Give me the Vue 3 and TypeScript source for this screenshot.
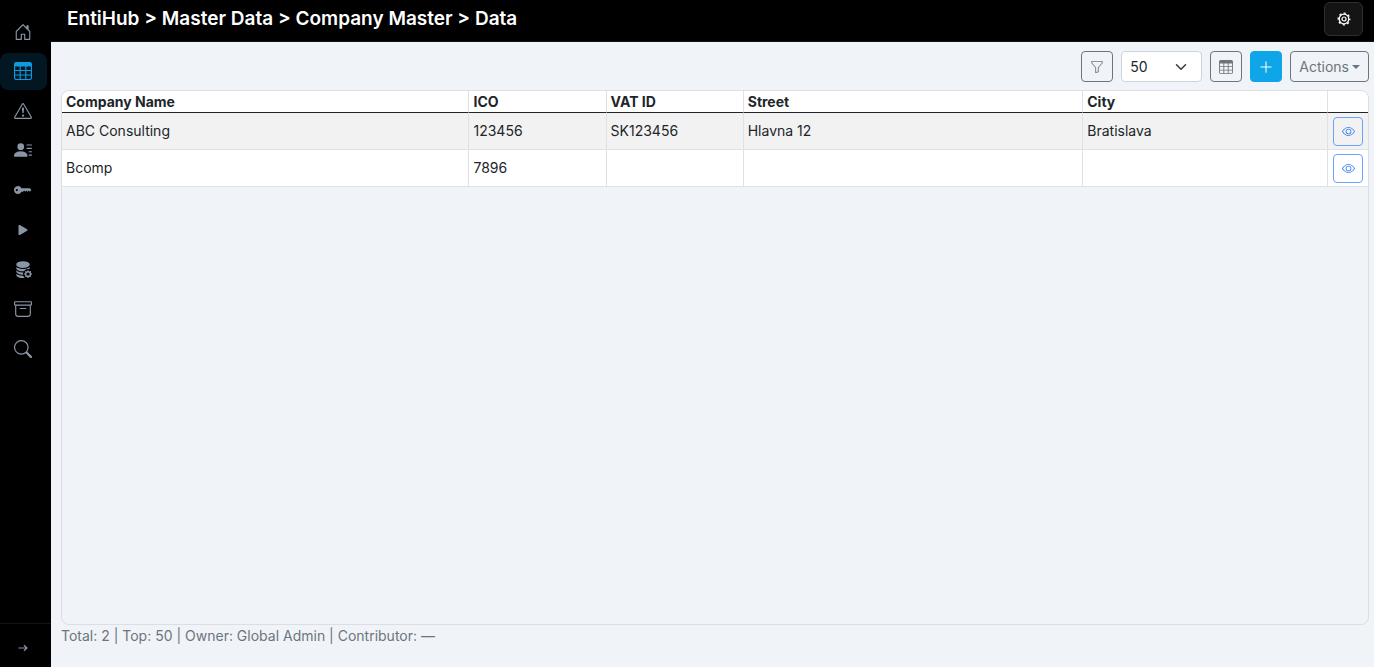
<script setup lang="ts">
import { ref } from 'vue'

interface NavItem {
  label: string
  paths: string[]
  active?: boolean
}

interface Company {
  name: string
  ico: string
  vat: string
  street: string
  city: string
}

const tablePath =
  'M0 2a2 2 0 0 1 2-2h12a2 2 0 0 1 2 2v12a2 2 0 0 1-2 2H2a2 2 0 0 1-2-2zm15 2h-4v3h4zm0 4h-4v3h4zm0 4h-4v3h3a1 1 0 0 0 1-1zm-5 3v-3H6v3zm-5 0v-3H1v2a1 1 0 0 0 1 1zm-4-4h4V8H1zm0-4h4V4H1zm5-3v3h4V4zm4 4H6v3h4z'

const navItems: NavItem[] = [
  {
    label: 'Home',
    paths: [
      'M8.354 1.146a.5.5 0 0 0-.708 0l-6 6A.5.5 0 0 0 1.5 7.5v7a.5.5 0 0 0 .5.5h4.5a.5.5 0 0 0 .5-.5v-4h2v4a.5.5 0 0 0 .5.5H14a.5.5 0 0 0 .5-.5v-7a.5.5 0 0 0-.146-.354L13 5.793V2.5a.5.5 0 0 0-.5-.5h-1a.5.5 0 0 0-.5.5v1.293zM2.5 14V7.707l5.5-5.5 5.5 5.5V14H10v-4a.5.5 0 0 0-.5-.5h-3a.5.5 0 0 0-.5.5v4z',
    ],
  },
  { label: 'Master Data', paths: [tablePath], active: true },
  {
    label: 'Issues',
    paths: [
      'M7.938 2.016A.13.13 0 0 1 8.002 2a.13.13 0 0 1 .063.016.15.15 0 0 1 .054.057l6.857 11.667c.036.06.035.124.002.183a.2.2 0 0 1-.054.06.1.1 0 0 1-.066.017H1.146a.1.1 0 0 1-.066-.017.2.2 0 0 1-.054-.06.18.18 0 0 1 .002-.183L7.884 2.073a.15.15 0 0 1 .054-.057m1.044-.45a1.13 1.13 0 0 0-1.96 0L.165 13.233c-.457.778.091 1.767.98 1.767h13.713c.889 0 1.438-.99.98-1.767z',
      'M7.002 12a1 1 0 1 1 2 0 1 1 0 0 1-2 0M7.1 5.995a.905.905 0 1 1 1.8 0l-.35 3.507a.552.552 0 0 1-1.1 0z',
    ],
  },
  {
    label: 'Users',
    paths: [
      'M6 8a3 3 0 1 0 0-6 3 3 0 0 0 0 6m-5 6s-1 0-1-1 1-4 6-4 6 3 6 4-1 1-1 1zM11 3.5a.5.5 0 0 1 .5-.5h4a.5.5 0 0 1 0 1h-4a.5.5 0 0 1-.5-.5m.5 2.5a.5.5 0 0 0 0 1h4a.5.5 0 0 0 0-1zm2 3a.5.5 0 0 0 0 1h2a.5.5 0 0 0 0-1zm0 3a.5.5 0 0 0 0 1h2a.5.5 0 0 0 0-1z',
    ],
  },
  {
    label: 'Keys',
    paths: [
      'M3.5 11.5a3.5 3.5 0 1 1 3.163-5H14L15.5 8 14 9.5l-1-1-1 1-1-1-1 1-1-1-1 1H6.663a3.5 3.5 0 0 1-3.163 2M2.5 9a1 1 0 1 0 0-2 1 1 0 0 0 0 2',
    ],
  },
  {
    label: 'Run',
    paths: [
      'm11.596 8.697-6.363 3.692c-.54.313-1.233-.066-1.233-.697V4.308c0-.63.692-1.01 1.233-.696l6.363 3.692a.802.802 0 0 1 0 1.393',
    ],
  },
  {
    label: 'Data sources',
    paths: [
      'M8 1c-1.573 0-3.022.289-4.096.777C2.875 2.245 2 2.993 2 4s.875 1.755 1.904 2.223C4.978 6.711 6.427 7 8 7s3.022-.289 4.096-.777C13.125 5.755 14 5.007 14 4s-.875-1.755-1.904-2.223C11.022 1.289 9.573 1 8 1',
      'M2 7v-.839c.457.432 1.004.751 1.49.972C4.722 7.693 6.318 8 8 8s3.278-.307 4.51-.867c.486-.22 1.033-.54 1.49-.972V7c0 .424-.155.802-.411 1.133a4.51 4.51 0 0 0-4.815 1.843A12 12 0 0 1 8 10c-1.573 0-3.022-.289-4.096-.777C2.875 8.755 2 8.007 2 7m6.257 3.998L8 11c-1.682 0-3.278-.307-4.51-.867-.486-.22-1.033-.54-1.49-.972V10c0 1.007.875 1.755 1.904 2.223C4.978 12.711 6.427 13 8 13h.027a4.55 4.55 0 0 1 .23-2.002m-.002 3L8 14c-1.682 0-3.278-.307-4.51-.867-.486-.22-1.033-.54-1.49-.972V13c0 1.007.875 1.755 1.904 2.223C4.978 15.711 6.427 16 8 16c.536 0 1.058-.034 1.555-.097a4.5 4.5 0 0 1-1.3-1.905m3.631-4.538c.18-.613 1.048-.613 1.229 0l.043.148a.64.64 0 0 0 .921.382l.136-.074c.561-.306 1.175.308.87.869l-.075.136a.64.64 0 0 0 .382.92l.149.045c.612.18.612 1.048 0 1.229l-.15.043a.64.64 0 0 0-.38.921l.074.136c.305.561-.309 1.175-.87.87l-.136-.075a.64.64 0 0 0-.92.382l-.045.149c-.18.612-1.048.612-1.229 0l-.043-.15a.64.64 0 0 0-.921-.38l-.136.074c-.561.305-1.175-.309-.87-.87l.075-.136a.64.64 0 0 0-.382-.92l-.148-.045c-.613-.18-.613-1.048 0-1.229l.148-.043a.64.64 0 0 0 .382-.921l-.074-.136c-.306-.561.308-1.175.869-.87l.136.075a.64.64 0 0 0 .92-.382zM14 12.5a1.5 1.5 0 1 0-3 0 1.5 1.5 0 0 0 3 0',
    ],
  },
  {
    label: 'Archive',
    paths: [
      'M0 2a1 1 0 0 1 1-1h14a1 1 0 0 1 1 1v2a1 1 0 0 1-1 1v7.5a2.5 2.5 0 0 1-2.5 2.5h-9A2.5 2.5 0 0 1 1 12.5V5a1 1 0 0 1-1-1zm2 3v7.5A1.5 1.5 0 0 0 3.5 14h9a1.5 1.5 0 0 0 1.5-1.5V5zm13-3H1v2h14zM5 7.5a.5.5 0 0 1 .5-.5h5a.5.5 0 0 1 0 1h-5a.5.5 0 0 1-.5-.5',
    ],
  },
  {
    label: 'Search',
    paths: [
      'M11.742 10.344a6.5 6.5 0 1 0-1.397 1.398h-.001q.044.06.098.115l3.85 3.85a1 1 0 0 0 1.415-1.414l-3.85-3.85a1 1 0 0 0-.115-.1zM12 6.5a5.5 5.5 0 1 1-11 0 5.5 5.5 0 0 1 11 0',
    ],
  },
]

const companies: Company[] = [
  { name: 'ABC Consulting', ico: '123456', vat: 'SK123456', street: 'Hlavna 12', city: 'Bratislava' },
  { name: 'Bcomp', ico: '7896', vat: '', street: '', city: '' },
]

const pageSize = ref('50')
</script>

<template>
  <div class="shell">
    <aside class="sidebar">
      <nav class="nav" aria-label="Main">
        <a
          v-for="item in navItems"
          :key="item.label"
          href="#"
          class="nav-link"
          :class="{ active: item.active }"
          :aria-label="item.label"
        >
          <svg viewBox="0 0 16 16" width="18" height="18" fill="currentColor" aria-hidden="true">
            <path v-for="d in item.paths" :key="d" :d="d" />
          </svg>
        </a>
      </nav>
      <div class="sidebar-foot">
        <button type="button" class="expand" aria-label="Expand menu">
          <svg viewBox="0 0 10 10" width="10" height="10" fill="none" stroke="currentColor" aria-hidden="true">
            <path d="M.5 5h8.5M6 2.2 9 5 6 7.8" stroke-width="1.2" />
          </svg>
        </button>
      </div>
    </aside>

    <div class="page">
      <header class="topbar">
        <h1 class="title">EntiHub &gt; Master Data &gt; Company Master &gt; Data</h1>
        <button type="button" class="settings" aria-label="Settings">
          <svg viewBox="0 0 14 14" width="14" height="14" fill="none" stroke="currentColor" aria-hidden="true">
            <circle cx="7" cy="7" r="4.8" stroke-width="1.3" />
            <circle cx="7" cy="7" r="5.8" stroke-width="1.3" stroke-dasharray="2.2 2.355" stroke-dashoffset="1.1" />
            <circle cx="7" cy="7" r="2" stroke-width="1.2" />
          </svg>
        </button>
      </header>

      <main class="content">
        <div class="toolbar">
          <button type="button" class="btn icon-btn" aria-label="Filter">
            <svg viewBox="0 0 16 16" width="14" height="14" fill="currentColor" aria-hidden="true">
              <path d="M1.5 1.5A.5.5 0 0 1 2 1h12a.5.5 0 0 1 .5.5v2a.5.5 0 0 1-.128.334L10 8.692V13.5a.5.5 0 0 1-.342.474l-3 1A.5.5 0 0 1 6 14.5V8.692L1.628 3.834A.5.5 0 0 1 1.5 3.5zm1 .5v1.308l4.372 4.858A.5.5 0 0 1 7 8.5v5.306l2-.666V8.5a.5.5 0 0 1 .128-.334L13.5 3.308V2z" />
            </svg>
          </button>
          <div class="select-wrap">
            <select v-model="pageSize" class="select" aria-label="Rows per page">
              <option>10</option>
              <option>50</option>
              <option>100</option>
            </select>
            <svg class="chevron" viewBox="0 0 16 16" width="12" height="12" fill="none" stroke="currentColor" aria-hidden="true">
              <path d="m2 5 6 6 6-6" stroke-width="2" stroke-linecap="round" stroke-linejoin="round" />
            </svg>
          </div>
          <button type="button" class="btn icon-btn" aria-label="Columns">
            <svg viewBox="0 0 16 16" width="14" height="14" fill="currentColor" aria-hidden="true">
              <path :d="tablePath" />
            </svg>
          </button>
          <button type="button" class="btn icon-btn primary" aria-label="Add">
            <svg viewBox="0 0 16 16" width="14" height="14" fill="currentColor" aria-hidden="true">
              <path d="M8 1.5a.6.6 0 0 1 .6.6v5.3h5.3a.6.6 0 0 1 0 1.2H8.600v5.300a.6.6 0 0 1-1.200 0V8.600H2.100a.6.6 0 0 1 0-1.200h5.300V2.100a.6.6 0 0 1 .6-.6" />
            </svg>
          </button>
          <button type="button" class="btn actions">
            Actions
            <svg viewBox="0 0 8 4" width="8" height="4" fill="currentColor" aria-hidden="true">
              <path d="M0 0h8L4 4z" />
            </svg>
          </button>
        </div>

        <div class="grid-card">
          <table class="grid">
            <colgroup>
              <col class="c-name" />
              <col class="c-ico" />
              <col class="c-vat" />
              <col class="c-street" />
              <col />
              <col class="c-view" />
            </colgroup>
            <thead>
              <tr>
                <th scope="col">Company Name</th>
                <th scope="col">ICO</th>
                <th scope="col">VAT ID</th>
                <th scope="col">Street</th>
                <th scope="col">City</th>
                <th scope="col" aria-label="View"></th>
              </tr>
            </thead>
            <tbody>
              <tr v-for="c in companies" :key="c.ico">
                <td>{{ c.name }}</td>
                <td>{{ c.ico }}</td>
                <td>{{ c.vat }}</td>
                <td>{{ c.street }}</td>
                <td>{{ c.city }}</td>
                <td class="view-cell">
                  <button type="button" class="view" :aria-label="'View ' + c.name">
                    <svg viewBox="0 0 16 16" width="13" height="13" fill="currentColor" aria-hidden="true">
                      <path d="M16 8s-3-5.5-8-5.5S0 8 0 8s3 5.5 8 5.5S16 8 16 8M1.173 8a13 13 0 0 1 1.66-2.043C4.12 4.668 5.88 3.5 8 3.5s3.879 1.168 5.168 2.457A13 13 0 0 1 14.828 8q-.086.13-.195.288c-.335.48-.83 1.12-1.465 1.755C11.879 11.332 10.119 12.5 8 12.5s-3.879-1.168-5.168-2.457A13 13 0 0 1 1.172 8z" />
                      <path d="M8 5.5a2.5 2.5 0 1 0 0 5 2.5 2.5 0 0 0 0-5M4.5 8a3.5 3.5 0 1 1 7 0 3.5 3.5 0 0 1-7 0" />
                    </svg>
                  </button>
                </td>
              </tr>
            </tbody>
          </table>
        </div>
        <p class="status">Total: 2 | Top: 50 | Owner: Global Admin | Contributor: —</p>
      </main>
    </div>
  </div>
</template>

<style>
body {
  margin: 0;
  background: #f0f4f9;
}
</style>

<style scoped>
.shell {
  display: flex;
  min-height: 100vh;
  font-family: Inter, "Liberation Sans", sans-serif;
  font-size: 14px;
  line-height: 20px;
  color: #212529;
}

.shell *,
.shell {
  box-sizing: border-box;
}

button,
select {
  font: inherit;
}

svg {
  display: block;
  flex: none;
}

.sidebar {
  flex: none;
  display: flex;
  flex-direction: column;
  justify-content: space-between;
  width: 51px;
  padding-top: 13px;
  background: #000;
}

.nav {
  display: flex;
  flex-direction: column;
  justify-content: space-between;
  height: 354px;
  padding-right: 4px;
}

.nav-link {
  display: flex;
  align-items: center;
  justify-content: center;
  height: 37px;
  padding-right: 1px;
  border-radius: 8px;
  color: #8a96a8;
}

.nav-link.active {
  background: #021722;
  color: #0f9cde;
}

.sidebar-foot {
  display: flex;
  justify-content: center;
  height: 44px;
  padding: 4px 6px 0 0;
  border-top: 1px solid #141414;
}

.expand {
  display: flex;
  align-items: center;
  justify-content: center;
  width: 40px;
  padding: 0;
  border: 0;
  background: none;
  color: #8a96a8;
}

.page {
  flex: 1;
  min-width: 0;
  display: flex;
  flex-direction: column;
}

.topbar {
  display: flex;
  align-items: center;
  justify-content: space-between;
  height: 42px;
  padding: 0 11px 4px 16px;
  border-bottom: 1px solid #141414;
  background: #000;
}

.title {
  margin: 0;
  font-size: 19px;
  font-weight: 600;
  line-height: 24px;
  white-space: nowrap;
  color: #fff;
}

.settings {
  display: flex;
  align-items: center;
  justify-content: center;
  width: 39px;
  height: 34px;
  padding: 0;
  border: 1px solid #2e2e2e;
  border-radius: 6px;
  background: #141414;
  color: #fff;
}

.content {
  flex: 1;
  display: flex;
  flex-direction: column;
  padding: 9px 5px 21px 10px;
}

.toolbar {
  display: flex;
  justify-content: flex-end;
  gap: 8px;
  margin-bottom: 8px;
}

.btn {
  display: flex;
  align-items: center;
  justify-content: center;
  height: 31px;
  border: 1px solid #6c757d;
  border-radius: 4px;
  background: transparent;
  color: #6c757d;
}

.icon-btn {
  width: 32px;
  padding: 0;
}

.primary {
  border-color: #0ea5e9;
  background: #0ea5e9;
  color: #fff;
}

.actions {
  gap: 3px;
  padding: 0 8px;
}

.select-wrap {
  position: relative;
  width: 81px;
}

.select {
  width: 100%;
  height: 31px;
  padding: 0 8px;
  border: 1px solid #ced4da;
  border-radius: 4px;
  background: #fff;
  color: #212529;
  appearance: none;
}

.chevron {
  position: absolute;
  top: 10px;
  right: 15px;
  color: #343a40;
  pointer-events: none;
}

.grid-card {
  flex: 1;
  overflow: hidden;
  border: 1px solid #dbdfe4;
  border-radius: 8px;
}

.grid {
  width: 100%;
  table-layout: fixed;
  border-collapse: separate;
  border-spacing: 0;
  background: #fff;
}

.c-name {
  width: 31.2%;
}

.c-ico,
.c-vat {
  width: 10.5%;
}

.c-street {
  width: 26%;
}

.c-view {
  width: 40px;
}

th,
td {
  padding: 0 4px;
  border-right: 1px solid #dee2e6;
  text-align: left;
}

th:last-child,
td:last-child {
  border-right: 0;
}

th {
  height: 22px;
  border-bottom: 1px solid #212529;
  font-weight: 700;
}

td {
  height: 37px;
  border-bottom: 1px solid #dee2e6;
}

tbody tr:nth-child(odd) {
  background: #f2f2f2;
}

.view-cell {
  padding: 0 5px;
}

.view {
  display: flex;
  align-items: center;
  justify-content: center;
  width: 30px;
  height: 29px;
  padding: 0;
  border: 1px solid #6ba3fa;
  border-radius: 4px;
  background: transparent;
  color: #3b82f6;
}

.status {
  margin: 0;
  padding-top: 1px;
  color: #6c757d;
}
</style>
